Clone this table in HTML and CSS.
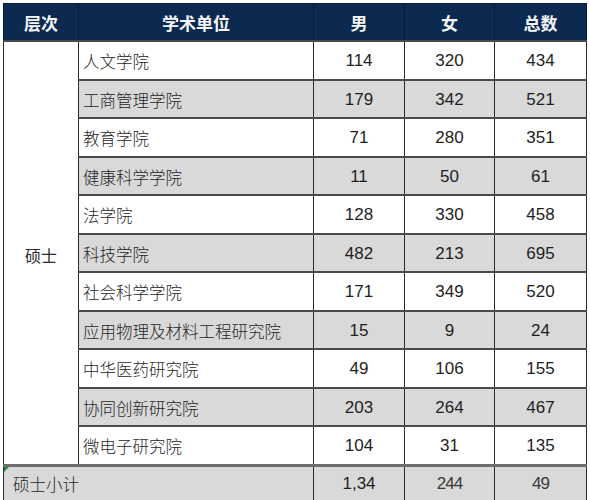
FILE: index.html
```html
<!DOCTYPE html>
<html lang="zh-CN">
<head>
<meta charset="utf-8">
<title>硕士人数统计</title>
<link rel="stylesheet" href="styles.css">
</head>
<body>
<table class="stats">
  <colgroup>
    <col class="c-level">
    <col class="c-unit">
    <col class="c-num">
    <col class="c-num2">
    <col class="c-num3">
  </colgroup>
  <thead>
    <tr>
      <th>层次</th>
      <th>学术单位</th>
      <th>男</th>
      <th>女</th>
      <th>总数</th>
    </tr>
  </thead>
  <tbody>
    <tr>
      <td class="level" rowspan="11">硕士</td>
      <td class="unit">人文学院</td><td class="num">114</td><td class="num">320</td><td class="num">434</td>
    </tr>
    <tr class="alt"><td class="unit">工商管理学院</td><td class="num">179</td><td class="num">342</td><td class="num">521</td></tr>
    <tr><td class="unit">教育学院</td><td class="num">71</td><td class="num">280</td><td class="num">351</td></tr>
    <tr class="alt"><td class="unit">健康科学学院</td><td class="num">11</td><td class="num">50</td><td class="num">61</td></tr>
    <tr><td class="unit">法学院</td><td class="num">128</td><td class="num">330</td><td class="num">458</td></tr>
    <tr class="alt"><td class="unit">科技学院</td><td class="num">482</td><td class="num">213</td><td class="num">695</td></tr>
    <tr><td class="unit">社会科学学院</td><td class="num">171</td><td class="num">349</td><td class="num">520</td></tr>
    <tr class="alt"><td class="unit">应用物理及材料工程研究院</td><td class="num">15</td><td class="num">9</td><td class="num">24</td></tr>
    <tr><td class="unit">中华医药研究院</td><td class="num">49</td><td class="num">106</td><td class="num">155</td></tr>
    <tr class="alt"><td class="unit">协同创新研究院</td><td class="num">203</td><td class="num">264</td><td class="num">467</td></tr>
    <tr><td class="unit">微电子研究院</td><td class="num">104</td><td class="num">31</td><td class="num">135</td></tr>
    <tr class="subtotal">
      <td class="sub-label" colspan="2">硕士小计</td>
      <td class="num">1,34</td><td class="num blur">244</td><td class="num blur">49</td>
    </tr>
  </tbody>
</table>
</body>
</html>
```
FILE: styles.css
```css
html, body {
  margin: 0;
  padding: 0;
  background: #ffffff;
}
body {
  padding: 3px 0 0 3px;
  font-family: "Liberation Sans", "Noto Sans CJK SC", sans-serif;
  color: #1e1e1e;
}
.stats {
  border-collapse: collapse;
  table-layout: fixed;
  width: 584px;
}
.c-level { width: 75px; }
.c-unit { width: 235px; }
.c-num { width: 91px; }
.c-num2 { width: 90px; }
.c-num3 { width: 92px; }

.stats th {
  background: #0c2a50;
  color: #f4f6fa;
  font-family: "Noto Sans CJK SC", sans-serif;
  font-weight: 700;
  font-size: 17px;
  height: 36px;
  padding: 0;
  border: 1px solid #071c38;
  text-align: center;
}
.stats td {
  height: 34.5px;
  padding: 2px 0 0 0;
  border-left: 1px solid #2a2a2a;
  border-right: 1px solid #2a2a2a;
  border-top: 2px solid #4a4a4a;
  border-bottom: 2px solid #4a4a4a;
  font-size: 17px;
  background: #ffffff;
}
.stats tr.alt td {
  background: #d9d9d9;
}
.stats td.level {
  background: #ffffff;
  text-align: center;
  font-family: "Noto Sans CJK SC", sans-serif;
  font-size: 16px;
  color: #2a2a2a;
  padding-top: 4px;
}
.stats td.unit {
  font-family: "Noto Sans CJK SC", sans-serif;
  font-weight: 300;
  font-size: 16.5px;
  padding-left: 4px;
  color: #262626;
}
.stats td.num {
  text-align: center;
}
.stats tr.subtotal td {
  background: #d9d9d9;
  border-top: 3px solid #6e6e6e;
  border-bottom: none;
  height: 34px;
  padding-top: 0;
  padding-bottom: 2px;
}
.stats tr.subtotal td.sub-label {
  position: relative;
  font-family: "Noto Sans CJK SC", sans-serif;
  font-weight: 300;
  font-size: 16.5px;
  padding-left: 9px;
  color: #262626;
}
.stats td.sub-label::before {
  content: "";
  position: absolute;
  left: 0;
  top: 0;
  width: 0;
  height: 0;
  border-top: 5px solid #1f8a3a;
  border-right: 5px solid transparent;
}
.stats td.blur {
  color: #3a3a3a;
  letter-spacing: -1px;
}
```
